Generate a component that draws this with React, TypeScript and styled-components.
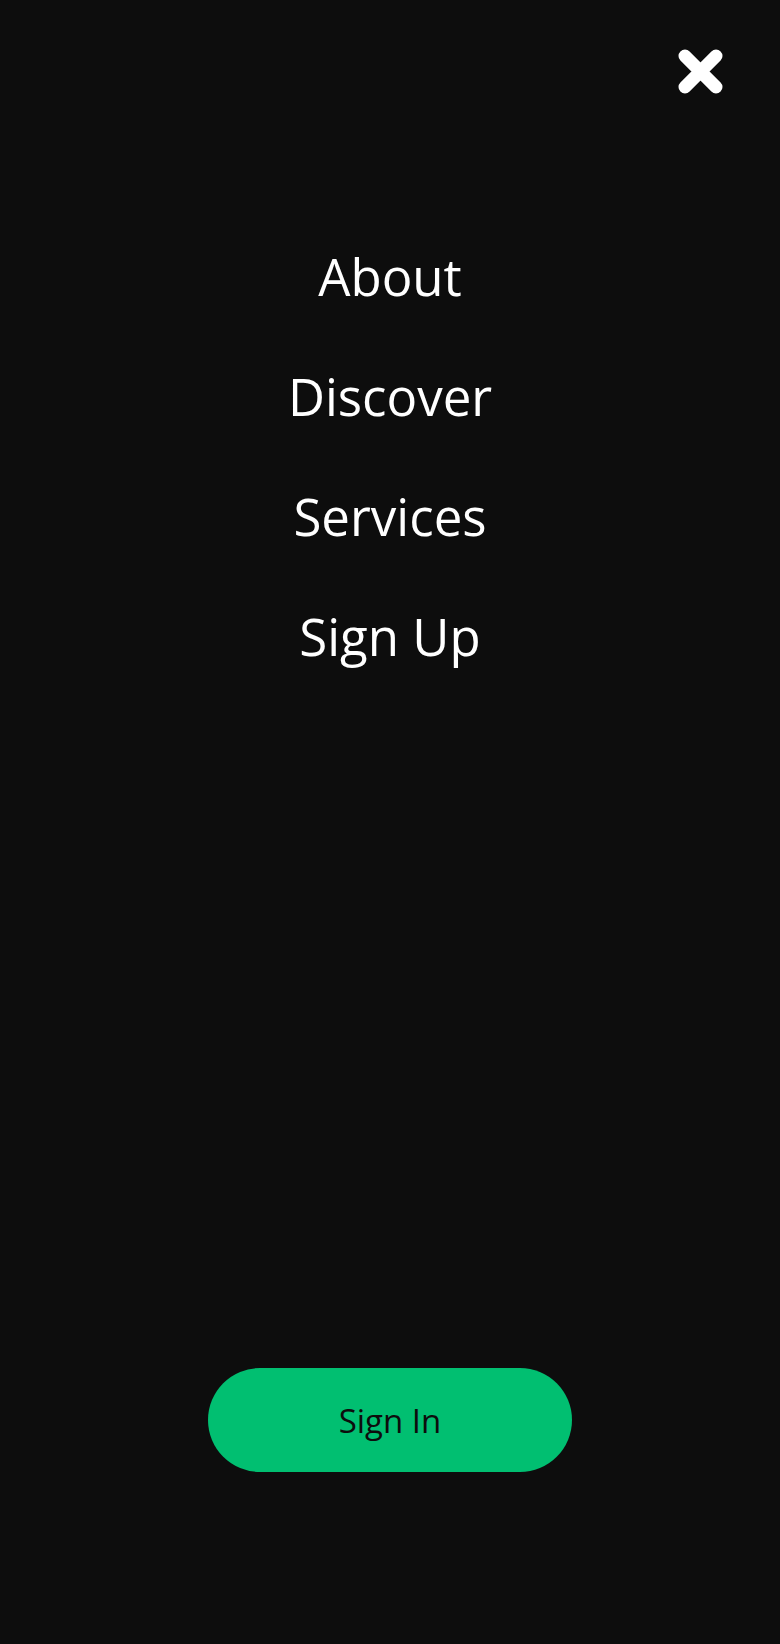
import React from "react";
import styled, { createGlobalStyle } from "styled-components";

const GlobalStyle = createGlobalStyle`
  html, body { margin: 0; padding: 0; background: #0d0d0d; }
  * { box-sizing: border-box; }
`;

const Sidebar = styled.aside`
  width: 780px;
  height: 1644px;
  background: #0d0d0d;
  display: flex;
  flex-direction: column;
  font-family: "Open Sans", "Noto Sans", sans-serif;
`;

const TopBar = styled.div`
  display: flex;
  justify-content: flex-end;
  padding: 49px 57px 0 0;
`;

const CloseButton = styled.button`
  width: 45px;
  height: 45px;
  padding: 0;
  border: none;
  background: transparent;
  cursor: pointer;
  display: flex;
`;

const Menu = styled.ul`
  list-style: none;
  margin: 0;
  padding: 0;
  margin-top: 122px;
  display: flex;
  flex-direction: column;
  align-items: center;
`;

const MenuItem = styled.li`
  height: 120px;
  line-height: 120px;
`;

const MenuLink = styled.a`
  color: #fff;
  text-decoration: none;
  font-size: 51px;
  font-weight: 400;
`;

const Spacer = styled.div`
  flex: 1;
`;

const BtnWrap = styled.div`
  display: flex;
  justify-content: center;
  padding-bottom: 172px;
`;

const SignIn = styled.a`
  width: 364px;
  height: 104px;
  border-radius: 52px;
  background: #01bf71;
  color: #0d0d0d;
  font-size: 33px;
  display: flex;
  align-items: center;
  justify-content: center;
  text-decoration: none;
`;

export default function App() {
  const items = ["About", "Discover", "Services", "Sign Up"];
  return (
    <>
      <GlobalStyle />
      <Sidebar>
        <TopBar>
          <CloseButton aria-label="Close">
            <svg width="45" height="45" viewBox="0 0 45 45">
              <path
                d="M7 7 L38 38 M38 7 L7 38"
                stroke="#fff"
                strokeWidth="13"
                strokeLinecap="round"
              />
            </svg>
          </CloseButton>
        </TopBar>
        <Menu>
          {items.map((t) => (
            <MenuItem key={t}>
              <MenuLink href="#">{t}</MenuLink>
            </MenuItem>
          ))}
        </Menu>
        <Spacer />
        <BtnWrap>
          <SignIn href="#">Sign In</SignIn>
        </BtnWrap>
      </Sidebar>
    </>
  );
}
